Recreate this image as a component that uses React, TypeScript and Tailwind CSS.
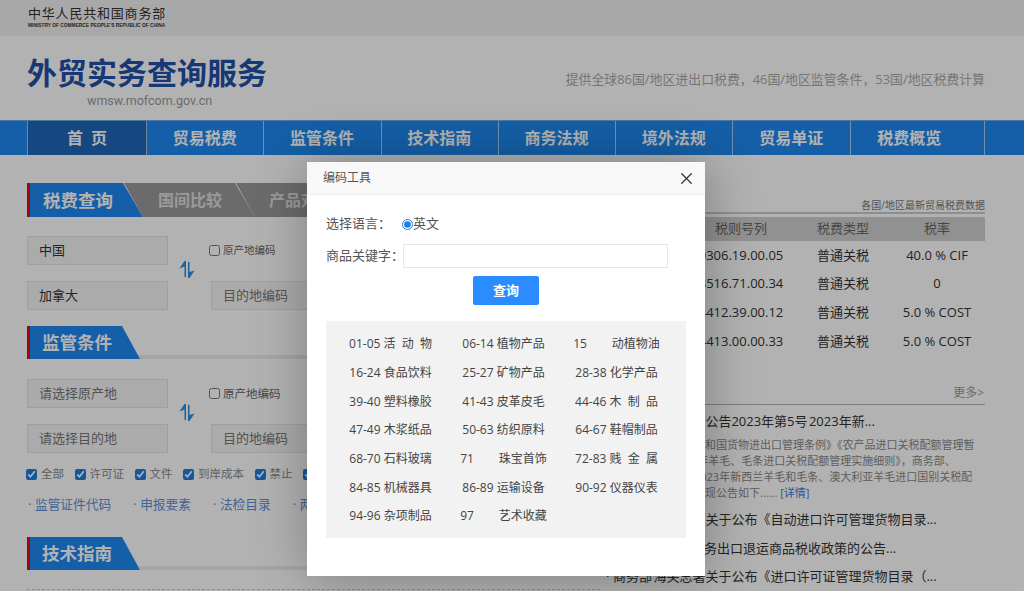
import { X } from 'lucide-react';

const sans = 'font-["Open_Sans","Noto_Sans_CJK_SC",sans-serif]';

const navItems = ['贸易税费', '监管条件', '技术指南', '商务法规', '境外法规', '贸易单证'];

const tariffRows = [
  ['0306.19.00.05', '40.0 % CIF'],
  ['8516.71.00.34', '0'],
  ['4412.39.00.12', '5.0 % COST'],
  ['4413.00.00.33', '5.0 % COST'],
];

const checks = ['全部', '许可证', '文件', '到岸成本', '禁止', '限制'];

const links = ['监管证件代码', '申报要素', '法检目录', '两用物项'];

// Chapter ranges inside the dialog; the spaces are part of how the site pads short names.
const chapters = [
  '01-05 活\u00a0\u00a0动\u00a0\u00a0物',
  '06-14 植物产品',
  '15\u00a0\u00a0\u00a0\u00a0\u00a0\u00a0\u00a0\u00a0动植物油',
  '16-24 食品饮料',
  '25-27 矿物产品',
  '28-38 化学产品',
  '39-40 塑料橡胶',
  '41-43 皮革皮毛',
  '44-46 木\u00a0\u00a0制\u00a0\u00a0品',
  '47-49 木浆纸品',
  '50-63 纺织原料',
  '64-67 鞋帽制品',
  '68-70 石料玻璃',
  '71\u00a0\u00a0\u00a0\u00a0\u00a0\u00a0\u00a0\u00a0珠宝首饰',
  '72-83 贱\u00a0\u00a0金\u00a0\u00a0属',
  '84-85 机械器具',
  '86-89 运输设备',
  '90-92 仪器仪表',
  '94-96 杂项制品',
  '97\u00a0\u00a0\u00a0\u00a0\u00a0\u00a0\u00a0\u00a0艺术收藏',
];

function SwapIcon() {
  return (
    <svg width="16" height="17" viewBox="0 0 16 17" fill="#2890e8">
      <path d="M5.5 0 L7 0 L7 16 L5.5 16 L5.5 5.5 L0.5 7.5 Z" />
      <path d="M9 1 L10.5 1 L10.5 11 L15.5 9.5 L10.5 17 L9 17 Z" />
    </svg>
  );
}

function Field({ text, width = 'w-[141px]', muted = false }: { text: string; width?: string; muted?: boolean }) {
  return (
    <div
      className={`${width} h-[29px] shrink-0 bg-[#f5f5f5] border border-[#e4e4e4] pl-[11px] flex items-center text-[13px] ${
        muted ? 'text-[#777]' : 'text-[#333]'
      }`}
    >
      {text}
    </div>
  );
}

function SectionTitle({ title }: { title: string }) {
  return (
    <div className="h-[33px] flex items-stretch">
      <div className="w-[3px] bg-[#e01010]" />
      <div className="w-[110px] bg-[#1e88f0] [clip-path:polygon(0_0,92px_0,110px_100%,0_100%)] pl-[12px] flex items-center text-[17.5px] font-bold text-white">
        {title}
      </div>
      <div className="flex-1 self-end h-[4px] -ml-[3px] bg-[#ececec]" />
    </div>
  );
}

function QueryRows({
  from,
  to,
  originMuted,
  labelSize,
}: {
  from: string;
  to: string;
  originMuted: boolean;
  labelSize: string;
}) {
  return (
    <div className="flex">
      <div className="flex flex-col gap-[16px]">
        <Field text={from} muted={originMuted} />
        <Field text={to} muted={originMuted} />
      </div>
      <div className="w-[43px] flex justify-center pr-[5px] pt-[25px]">
        <SwapIcon />
      </div>
      <div className="flex flex-col">
        <div className={`h-[29px] -ml-[2px] flex items-center gap-[3px] text-[#666] ${labelSize}`}>
          <input type="checkbox" className="w-[11px] h-[11px]" />
          <span>原产地编码</span>
        </div>
        <div className="mt-[16px]">
          <Field text="目的地编码" width="w-[160px]" muted />
        </div>
      </div>
    </div>
  );
}

export default function App() {
  return (
    <div className={`relative w-[1024px] h-[591px] overflow-hidden bg-white ${sans}`}>
      {/* ministry strip */}
      <div className="h-[36px] bg-[#f1f1f1] pl-[28px] pt-[5px]">
        <div className="text-[13px] leading-[16px] tracking-[0.8px] text-[#333]">中华人民共和国商务部</div>
        <div className="mt-[1px] text-[4.85px] leading-[7px] font-bold text-[#333] whitespace-nowrap font-['Liberation_Sans',sans-serif]">
          MINISTRY OF COMMERCE PEOPLE'S REPUBLIC OF CHINA
        </div>
      </div>

      {/* site header */}
      <div className="h-[84px] flex justify-between pr-[39px] pl-[27px]">
        <div>
          <div className="mt-[15px] text-[30px] leading-[44px] font-bold text-[#2350a8]">外贸实务查询服务</div>
          <div className="-mt-[2px] pl-[60px] text-[12.5px] leading-[16px] text-[#999] font-['Roboto',sans-serif]">wmsw.mofcom.gov.cn</div>
        </div>
        <div className="mt-[33px] text-[12.9px] leading-[20px] text-[#aaa]">提供全球86国/地区进出口税费，46国/地区监管条件，53国/地区税费计算</div>
      </div>

      {/* main nav */}
      <div className="h-[35px] bg-[#1e88f0] pl-[27px] flex border-t border-[#e8e8e8]/40">
        <div className="w-[120px] border-x border-white/60 bg-[#1f66b8] flex items-center justify-center gap-[8px] text-[16px] font-bold text-white">
          <span>首</span>
          <span>页</span>
        </div>
        {navItems.map((item) => (
          <div
            key={item}
            className="w-[117.3px] pr-[1px] border-r border-white/60 flex items-center justify-center text-[16px] font-bold text-white"
          >
            {item}
          </div>
        ))}
        <div className="w-[134px] pr-[16px] border-r border-white/60 flex items-center justify-center text-[16px] font-bold text-white">
          税费概览
        </div>
      </div>

      {/* page body */}
      <div className="flex pl-[27px] pt-[28px]">
        <div className="w-[573px] shrink-0">
          <div className="h-[34px] flex items-stretch">
            <div className="w-[3px] bg-[#e01010]" />
            <div className="w-[113px] bg-[#1e88f0] [clip-path:polygon(0_0,93px_0,113px_100%,0_100%)] pl-[13px] flex items-center text-[17.5px] font-bold text-white">
              税费查询
            </div>
            <div className="w-[131px] -ml-[19px] bg-[#9a9a9a] [clip-path:polygon(0_0,111px_0,131px_100%,19px_100%)] pl-[34px] flex items-center text-[16px] font-bold text-[#ddd]">
              国间比较
            </div>
            <div className="w-[200px] -ml-[19px] bg-[#9a9a9a] pl-[33px] [clip-path:polygon(0_0,100%_0,100%_100%,19px_100%)] flex items-center text-[16px] font-bold text-[#ddd]">
              产品对比
            </div>
          </div>

          <div className="mt-[19px]">
            <QueryRows from="中国" to="加拿大" originMuted={false} labelSize="text-[10.5px]" />
          </div>

          <div className="mt-[16px]">
            <SectionTitle title="监管条件" />
          </div>

          <div className="mt-[20px]">
            <QueryRows from="请选择原产地" to="请选择目的地" originMuted labelSize="text-[11.5px]" />
          </div>

          <div className="mt-[14px] -ml-[1px] h-[14px] flex items-center gap-[10.5px] text-[11.5px] text-[#888]">
            {checks.map((label) => (
              <label key={label} className="flex items-center gap-[4px]">
                <input type="checkbox" defaultChecked className="w-[11px] h-[11px] accent-[#1e7fe0]" />
                <span>{label}</span>
              </label>
            ))}
          </div>

          <div className="mt-[14px] h-[20px] flex items-center text-[12.7px] text-[#5f8fd8] gap-[21px]">
            {links.map((link) => (
              <div key={link} className="flex">
                <span className="w-[8px] pl-[1px]">·</span>
                <span>{link}</span>
              </div>
            ))}
          </div>

          <div className="mt-[22px]">
            <SectionTitle title="技术指南" />
          </div>
          <div className="mt-[19px] border-t border-dashed border-[#ccc]" />
        </div>

        {/* right column */}
        <div className="w-[385px] shrink-0 pt-[15px]">
          <div className="text-right text-[10px] leading-[14px] text-[#777]">各国/地区最新贸易税费数据</div>
          <div className="h-[2px] bg-[#c8ccd2]" />
          <div className="mt-[3px] h-[24px] bg-[#d0d0d0] grid grid-cols-[85px_112px_92px_96px] items-center text-center text-[13px] text-[#666]">
            <span>原产地</span>
            <span>税则号列</span>
            <span>税费类型</span>
            <span>税率</span>
          </div>
          {tariffRows.map(([code, rate]) => (
            <div key={code} className="h-[28.7px] grid grid-cols-[85px_112px_92px_96px] items-center text-center text-[13px] text-[#333]">
              <span>中国</span>
              <span>{code}</span>
              <span>普通关税</span>
              <span>{rate}</span>
            </div>
          ))}

          <div className="mt-[29px] pr-[1px] text-right text-[12px] leading-[16px] text-[#999]">更多&gt;</div>
          <div className="h-px mt-[3px] bg-[#a8b4c0]" />

          <div className="mt-[6px] text-[13px] text-[#333] [word-spacing:-2px]">
            <div className="h-[20px] leading-[20px] whitespace-nowrap flex">
              <span className="w-[13px] pl-[6px]">·</span>
              <span>商务部 海关总署公告2023年第5号 2023年新...</span>
            </div>
            <div className="mt-[6px] pl-[17px] text-[11px] leading-[16px] text-[#888] h-[64px] whitespace-nowrap [word-spacing:0]">
              根据《中华人民共和国货物进出口管理条例》《农产品进口关税配额管理暂
              <br />
              行办法》、《2023年羊毛、毛条进口关税配额管理实施细则》，商务部、
              <br />
              和海关总署现将2023年新西兰羊毛和毛条、澳大利亚羊毛进口国别关税配
              <br />
              额数量分配原则，现公告如下...... <span className="text-[#3b78d0]">[详情]</span>
            </div>
            <div className="mt-[4px] h-[29px] leading-[29px] whitespace-nowrap flex">
              <span className="w-[13px] pl-[6px]">·</span>
              <span>商务部 海关总署关于公布《自动进口许可管理货物目录...</span>
            </div>
            <div className="h-[28.5px] leading-[28.5px] whitespace-nowrap flex">
              <span className="w-[13px] pl-[6px]">·</span>
              <span>关于跨境电子商务出口退运商品税收政策的公告...</span>
            </div>
            <div className="h-[28.5px] leading-[28.5px] whitespace-nowrap flex">
              <span className="w-[13px] pl-[6px]">·</span>
              <span>商务部 海关总署关于公布《进口许可证管理货物目录（...</span>
            </div>
          </div>
        </div>
      </div>

      {/* dim layer */}
      <div className="absolute inset-0 bg-black/30" />

      {/* code tool dialog */}
      <div className="absolute left-[307px] top-[162px] w-[398px] h-[414px] bg-white shadow-[1px_1px_50px_rgba(0,0,0,0.3)]">
        <div className="h-[33px] bg-[#f8f8f8] border-b border-[#eee] pl-[16px] pr-[9px] flex items-center justify-between text-[12px] text-[#555]">
          <span>编码工具</span>
          <X size={19} strokeWidth={1.5} className="text-[#333]" />
        </div>

        <div className="px-[19px]">
          <div className="mt-[19px] h-[20px] flex items-center text-[13px] text-[#555]">
            <span className="w-[76px] whitespace-nowrap">选择语言：</span>
            <input type="radio" defaultChecked className="w-[11px] h-[11px] accent-[#1e7fe0] m-0" />
            <span>英文</span>
          </div>
          <div className="mt-[10px] flex items-center text-[13px] text-[#555]">
            <span className="w-[77px] whitespace-nowrap">商品关键字：</span>
            <div className="w-[265px] h-[24px] border border-[#e6e6e6]" />
          </div>
          <div className="mt-[8px] flex justify-center">
            <button className="w-[66px] h-[29px] bg-[#2a8cff] rounded-[2px] text-[13px] font-bold text-white">查询</button>
          </div>
          <div className="mt-[16px] w-[360px] h-[217px] bg-[#f2f2f2] pl-[8px] pt-[9px] grid grid-cols-[113px_113px_113px] auto-rows-[28.7px]">
            {chapters.map((chapter) => (
              <div key={chapter} className="flex items-center justify-center text-[12px] text-[#444] whitespace-nowrap">
                {chapter}
              </div>
            ))}
          </div>
        </div>
      </div>
    </div>
  );
}
